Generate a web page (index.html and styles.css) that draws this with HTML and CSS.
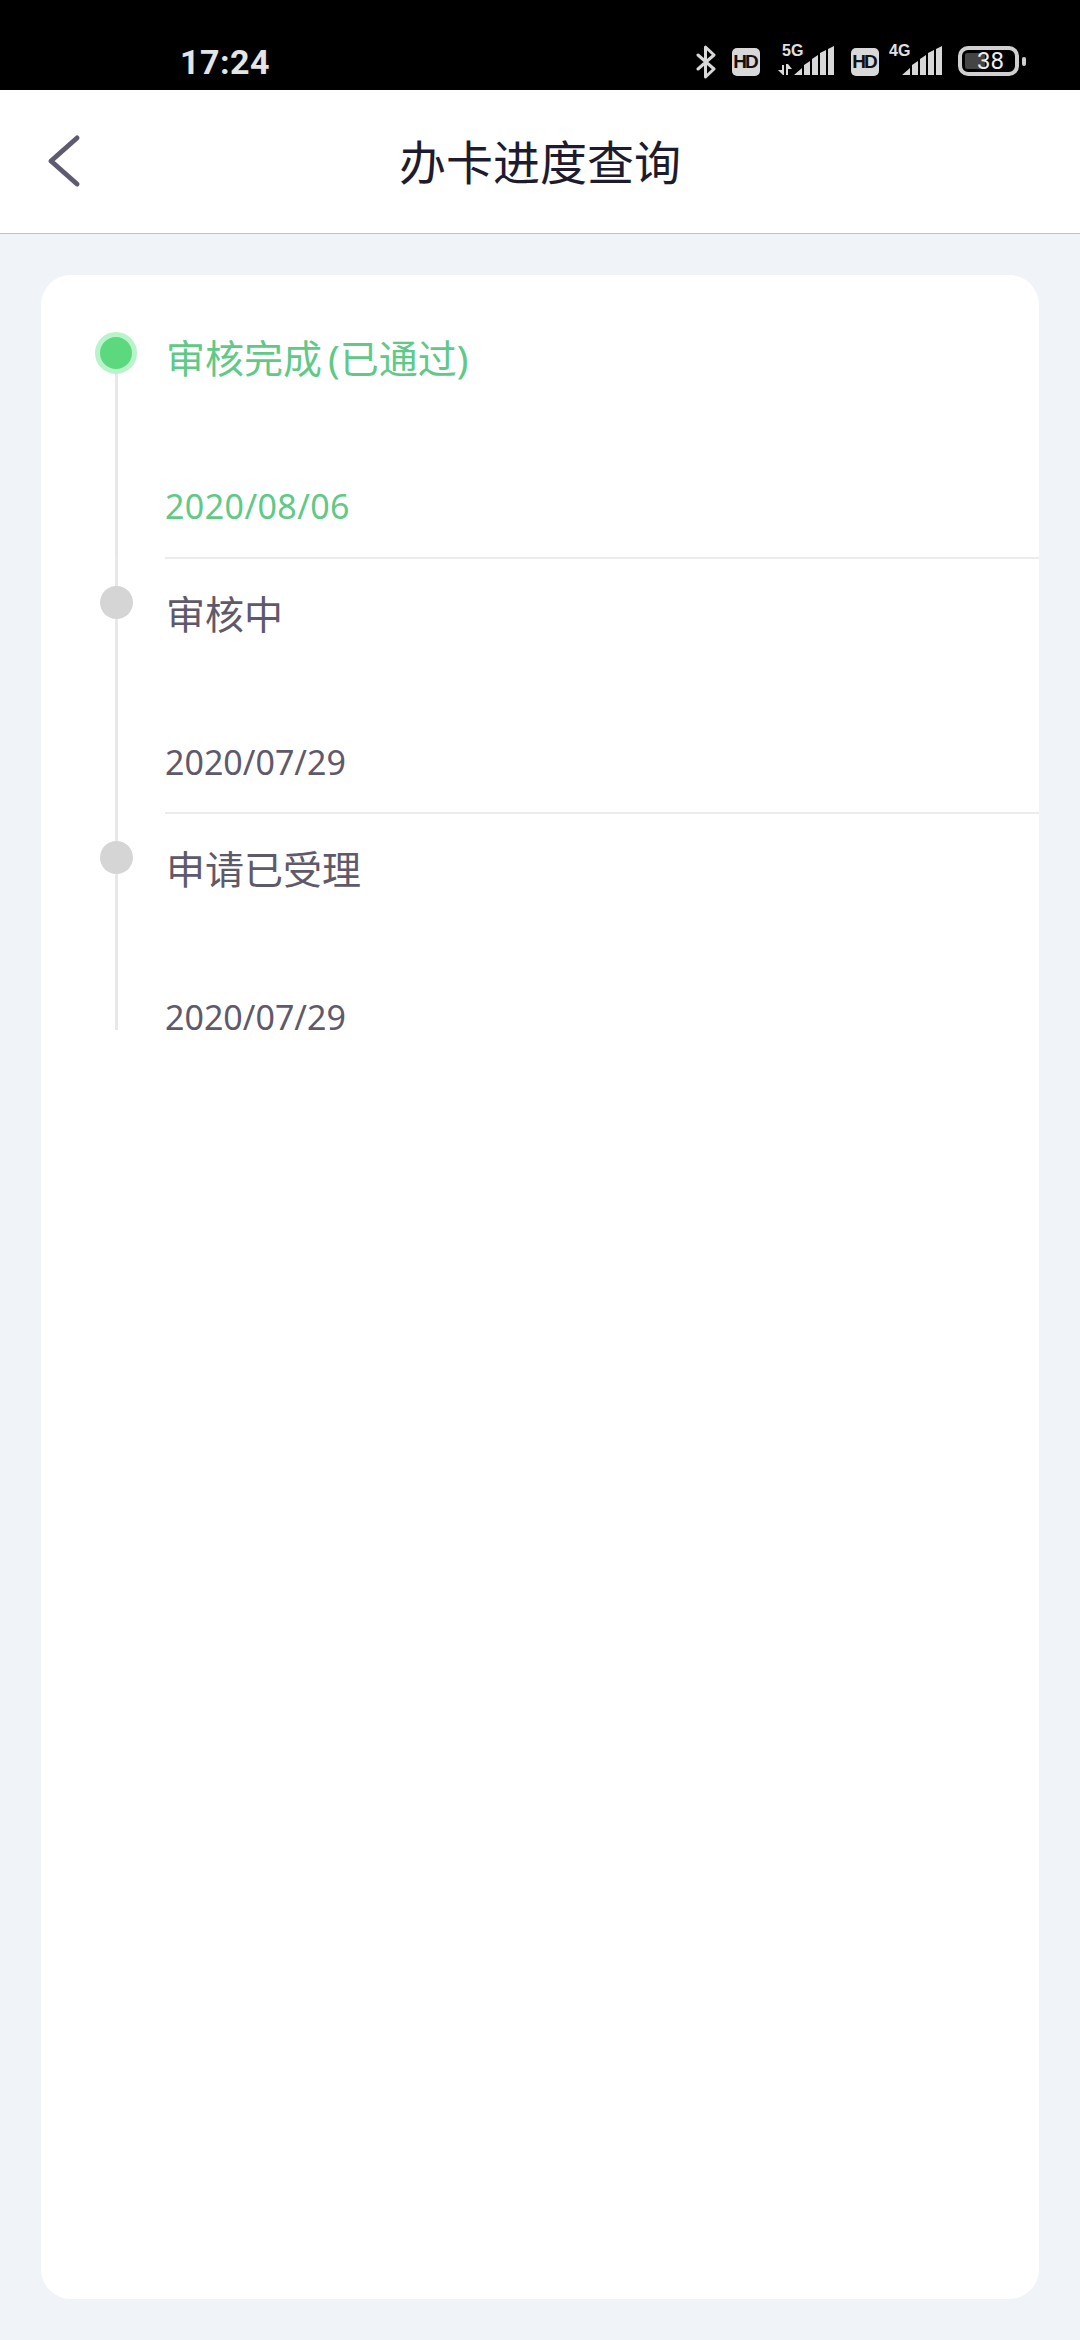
FILE: index.html
```html
<!DOCTYPE html>
<html lang="zh-CN">
<head>
    <meta charset="UTF-8">
    <title>办卡进度查询</title>
    <link rel="stylesheet" href="styles.css">
</head>
<body>
    <div class="status-bar">
        <span class="time">17:24</span>
        <div class="status-icons">
            <svg class="bt-icon" width="20" height="34" viewBox="0 0 20 34">
                <path d="M2 10 L18 24 L9.500 32 V2 L18 10 L2 24" fill="none" stroke="#d8d8d8" stroke-width="3" stroke-linejoin="round" stroke-linecap="round"/>
            </svg>
            <span class="hd hd-first">HD</span>
            <div class="net net-5g">
                <span class="net-label">5G</span>
                <svg width="58" height="30" viewBox="0 0 58 30">
                    <path d="M5 19 H7 V29 H6 L1 24 H5 Z M9 18 H11 L15 23 H11 V29 H9 Z" fill="#d8d8d8"/>
                    <path d="M17 29 L25 22 V29 Z M27 19 L33 15 V29 H27 Z M35 13 L41 9 V29 H35 Z M43 7 L49 4 V29 H43 Z M51 3 L57 0 V29 H51 Z" fill="#d8d8d8"/>
                </svg>
            </div>
            <span class="hd hd-second">HD</span>
            <div class="net net-4g">
                <span class="net-label">4G</span>
                <svg width="40" height="30" viewBox="0 0 40 30">
                    <path d="M0 29 L8 22 V29 Z M10 19 L16 15 V29 H10 Z M18 13 L24 9 V29 H18 Z M26 7 L32 4 V29 H26 Z M34 3 L40 0 V29 H34 Z" fill="#d8d8d8"/>
                </svg>
            </div>
            <div class="battery">
                <div class="battery-body">
                    <div class="battery-level"></div>
                    <span class="battery-text">38</span>
                </div>
                <div class="battery-nub"></div>
            </div>
        </div>
    </div>

    <header class="top-bar">
        <svg class="back-icon" width="40" height="60" viewBox="0 0 40 60">
            <path d="M30 8 L4 31 L30 54" fill="none" stroke="#5f5a70" stroke-width="5" stroke-linecap="round" stroke-linejoin="round"/>
        </svg>
        <h1 class="page-title">办卡进度查询</h1>
    </header>

    <main class="card">
        <div class="step step-done">
            <div class="step-axis"><span class="step-dot"></span></div>
            <div class="step-body">
                <div class="step-title">审核完成<span class="step-note">(已通过)</span></div>
                <div class="step-date">2020/08/06</div>
            </div>
        </div>
        <div class="step">
            <div class="step-axis"><span class="step-dot"></span></div>
            <div class="step-body">
                <div class="step-title">审核中</div>
                <div class="step-date">2020/07/29</div>
            </div>
        </div>
        <div class="step step-last">
            <div class="step-axis"><span class="step-dot"></span></div>
            <div class="step-body">
                <div class="step-title">申请已受理</div>
                <div class="step-date">2020/07/29</div>
            </div>
        </div>
    </main>
</body>
</html>
```

FILE: styles.css
```css
* {
    box-sizing: border-box;
}
body {
    margin: 0;
    height: 2340px;
    display: flex;
    flex-direction: column;
    background-color: #f0f4f9;
    font-family: "Noto Sans", "Noto Sans CJK SC", sans-serif;
}

/* Status bar */
.status-bar {
    height: 90px;
    background-color: #000;
    display: flex;
    align-items: center;
    justify-content: space-between;
    padding: 0 54px 0 180px;
    flex-shrink: 0;
}
.time {
    font-family: Roboto, sans-serif;
    font-weight: 700;
    font-size: 34px;
    letter-spacing: 0.5px;
    color: #e4e4e4;
    line-height: 56px;
    height: 56px;
    margin-top: 34px;
}
.status-icons {
    display: flex;
    align-items: flex-end;
    height: 90px;
    padding-bottom: 14px;
}
.bt-icon {
    margin-right: 16px;
    margin-bottom: -3px;
}
.hd {
    width: 28px;
    height: 28px;
    background-color: #d8d8d8;
    border-radius: 5px;
    color: #111;
    font-family: "Liberation Sans", sans-serif;
    font-weight: 700;
    font-size: 19px;
    line-height: 28px;
    text-align: center;
    letter-spacing: -2px;
    padding-right: 2px;
}
.hd-first {
    margin-right: 17px;
}
.hd-second {
    margin-left: 16px;
    margin-right: 10px;
}
.net {
    position: relative;
    height: 30px;
}
.net svg {
    display: block;
}
.net-label {
    position: absolute;
    top: -3px;
    font-family: "Liberation Sans", sans-serif;
    font-weight: 700;
    font-size: 16px;
    line-height: 16px;
    color: #e0e0e0;
}
.net-5g .net-label {
    left: 5px;
}
.net-4g {
    margin-left: 13px;
}
.net-4g .net-label {
    left: -13px;
}
.battery {
    display: flex;
    align-items: center;
    margin-left: 16px;
}
.battery-body {
    position: relative;
    width: 61px;
    height: 30px;
    border: 4px solid #d0d0d0;
    border-radius: 10px;
}
.battery-level {
    width: 20px;
    height: 16px;
    margin: 3px 0 0 3px;
    background-color: #444;
    border-radius: 2px;
}
.battery-text {
    position: absolute;
    top: 0;
    left: 15px;
    font-family: Roboto, sans-serif;
    font-size: 24px;
    line-height: 22px;
    color: #eee;
}
.battery-nub {
    width: 4px;
    height: 9px;
    margin-left: 3px;
    background-color: #d0d0d0;
    border-radius: 2px;
}

/* Header */
.top-bar {
    height: 144px;
    flex-shrink: 0;
    background-color: #fff;
    border-bottom: 1px solid #b9c1c9;
    display: flex;
    align-items: center;
    justify-content: center;
    position: relative;
}
.back-icon {
    position: absolute;
    left: 47px;
    top: 40px;
}
.page-title {
    margin: -4px 0 0;
    font-size: 47px;
    font-weight: 400;
    color: #1e1c2c;
}

/* Card with the timeline */
.card {
    flex: 1;
    margin: 41px;
    padding: 28px 0 0 54px;
    background-color: #fff;
    border-radius: 30px;
}
.step {
    display: flex;
}
.step-axis {
    width: 42px;
    margin-right: 28px;
    flex-shrink: 0;
    background: linear-gradient(#e8e8e8, #e8e8e8) center / 3px 100% no-repeat;
    display: flex;
    flex-direction: column;
    align-items: center;
}
.step-dot {
    width: 33px;
    height: 33px;
    margin-top: 27px;
    border-radius: 50%;
    background-color: #d5d5d5;
}
.step-done .step-axis {
    background-position: center bottom;
    background-size: 3px 80%;
}
.step-done .step-dot {
    width: 42px;
    height: 42px;
    margin-top: 29px;
    background-color: #5cd97f;
    border: 5px solid #b9f3ca;
}
.step-body {
    flex: 1;
    padding: 29px 0 37px;
    border-bottom: 2px solid #ececec;
    color: #5e596b;
}
.step-done .step-body {
    padding-bottom: 38px;
    color: #60c987;
}
.step-last .step-body {
    padding-bottom: 0;
    border-bottom: 0;
}
.step-title {
    font-size: 39px;
    line-height: 52px;
    padding-left: 1px;
}
.step-note {
    padding: 0 6px;
}
.step-date {
    font-size: 34px;
    line-height: 28px;
    margin-top: 108px;
    margin-bottom: -1px;
}
.step-done .step-date {
    letter-spacing: 0.4px;
}
```
